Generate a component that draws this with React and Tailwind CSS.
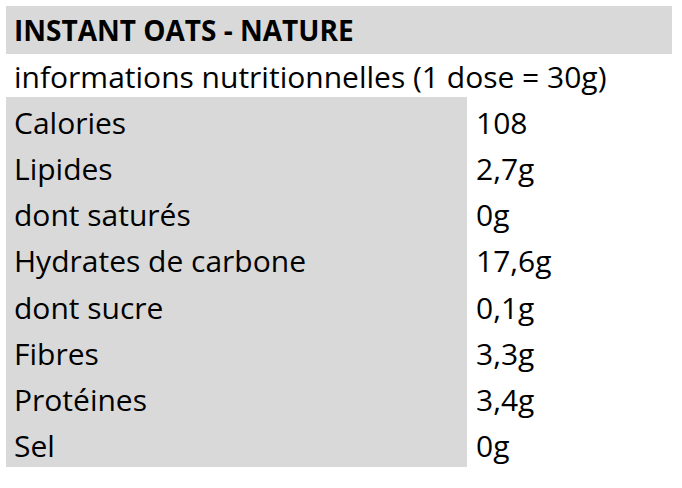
const ROWS = [
  ['Calories', '108'],
  ['Lipides', '2,7g'],
  ['dont saturés', '0g'],
  ['Hydrates de carbone', '17,6g'],
  ['dont sucre', '0,1g'],
  ['Fibres', '3,3g'],
  ['Protéines', '3,4g'],
  ['Sel', '0g'],
];

export default function App() {
  return (
    <div className="w-[682px] h-[488px] bg-white pt-[6px] pl-[6px] text-black font-['Open_Sans',sans-serif] text-[30px] leading-none">
      <div className="w-[666px] h-[48px] bg-[#d9d9d9] flex items-center pl-[8px] font-bold text-[28px]">
        INSTANT OATS - NATURE
      </div>
      <div className="h-[43px] flex items-center pl-[8px] pt-[2px]">
        informations nutritionnelles (1 dose = 30g)
      </div>
      <div className="flex flex-col">
        {ROWS.map(([label, value]) => (
          <div key={label} className="flex h-[46.25px]">
            <div className="w-[461px] bg-[#d9d9d9] flex items-center pl-[8px] pt-[5px]">{label}</div>
            <div className="flex items-center pl-[9px] pt-[5px]">{value}</div>
          </div>
        ))}
      </div>
    </div>
  );
}
